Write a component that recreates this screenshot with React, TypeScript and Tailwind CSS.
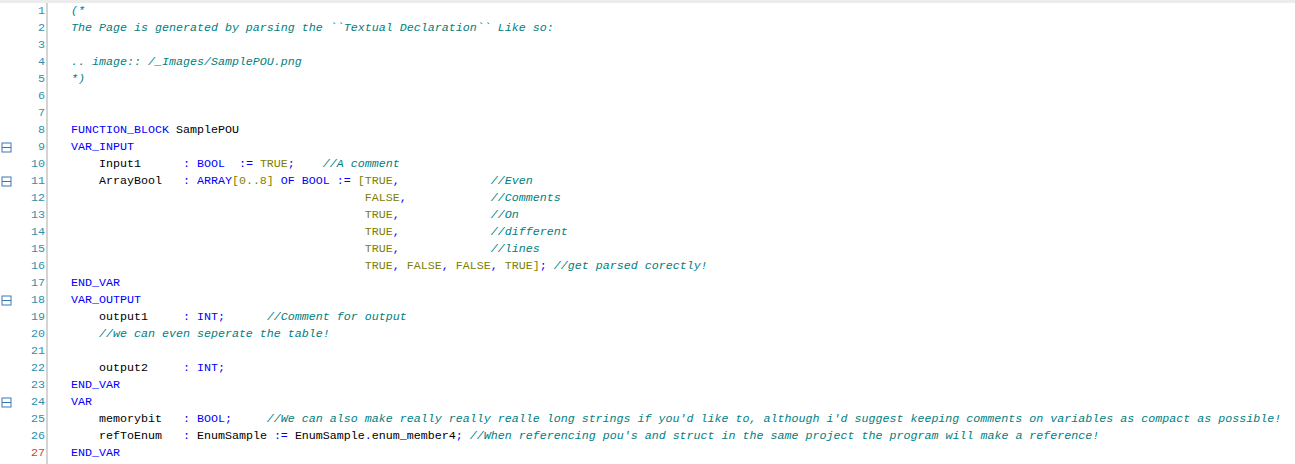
type Tok = [string, string];

const K = "text-[#0000ff]"; // keyword / punctuation
const C = "text-[#008080] italic"; // comment
const L = "text-[#808000]"; // literal
const I = "text-black"; // identifier

const lines: { toks: Tok[]; fold?: boolean }[] = [
  { toks: [["(*", C]] },
  { toks: [["The Page is generated by parsing the ``Textual Declaration`` Like so:", C]] },
  { toks: [] },
  { toks: [[".. image:: /_Images/SamplePOU.png", C]] },
  { toks: [["*)", C]] },
  { toks: [] },
  { toks: [] },
  { toks: [["FUNCTION_BLOCK", K], [" SamplePOU", I]] },
  { toks: [["VAR_INPUT", K]], fold: true },
  {
    toks: [
      ["    Input1      ", I],
      [": BOOL  := ", K],
      ["TRUE", L],
      [";", K],
      ["    //A comment", C],
    ],
  },
  {
    toks: [
      ["    ArrayBool   ", I],
      [": ARRAY", K],
      ["[0..8]", L],
      [" OF BOOL := ", K],
      ["[TRUE", L],
      [",", K],
      ["             //Even", C],
    ],
    fold: true,
  },
  { toks: [["                                          ", I], ["FALSE", L], [",", K], ["            //Comments", C]] },
  { toks: [["                                          ", I], ["TRUE", L], [",", K], ["             //On", C]] },
  { toks: [["                                          ", I], ["TRUE", L], [",", K], ["             //different", C]] },
  { toks: [["                                          ", I], ["TRUE", L], [",", K], ["             //lines", C]] },
  {
    toks: [
      ["                                          ", I],
      ["TRUE", L],
      [", ", K],
      ["FALSE", L],
      [", ", K],
      ["FALSE", L],
      [", ", K],
      ["TRUE]", L],
      [";", K],
      [" //get parsed corectly!", C],
    ],
  },
  { toks: [["END_VAR", K]] },
  { toks: [["VAR_OUTPUT", K]], fold: true },
  { toks: [["    output1     ", I], [": INT;", K], ["      //Comment for output", C]] },
  { toks: [["    //we can even seperate the table!", C]] },
  { toks: [] },
  { toks: [["    output2     ", I], [": INT;", K]] },
  { toks: [["END_VAR", K]] },
  { toks: [["VAR", K]], fold: true },
  {
    toks: [
      ["    memorybit   ", I],
      [": BOOL;", K],
      [
        "     //We can also make really really realle long strings if you'd like to, although i'd suggest keeping comments on variables as compact as possible!",
        C,
      ],
    ],
  },
  {
    toks: [
      ["    refToEnum   ", I],
      [": ", K],
      ["EnumSample ", I],
      [":= ", K],
      ["EnumSample", I],
      [".", K],
      ["enum_member4", I],
      [";", K],
      [" //When referencing pou's and struct in the same project the program will make a reference!", C],
    ],
  },
  { toks: [["END_VAR", K]] },
];

function FoldBox() {
  return (
    <svg width="11" height="11" viewBox="0 0 11 11" className="block">
      <rect x="1" y="1" width="9" height="9" fill="none" stroke="#3a78b5" strokeWidth="1" />
      <line x1="1" y1="5.5" x2="10" y2="5.5" stroke="#3a78b5" strokeWidth="1" />
    </svg>
  );
}

export default function App() {
  return (
    <div
      className="w-[1295px] h-[464px] bg-white overflow-hidden text-[11.67px] leading-[17px]"
      style={{ fontFamily: '"Liberation Mono", "Courier New", monospace' }}
    >
      <div className="h-[3px] bg-[#ececec]" />
      <div className="flex h-[461px]">
        <div className="w-[46px] flex flex-col">
          {lines.map((ln, i) => (
            <div key={i} className="h-[17px] flex items-center">
              <div className="w-[16px] pl-[1px] flex items-center">{ln.fold ? <FoldBox /> : null}</div>
              <div
                className={
                  "flex-1 text-right pr-[1px] " + (i === lines.length - 1 ? "text-[#d23c3c]" : "text-[#2b91af]")
                }
              >
                {i + 1}
              </div>
            </div>
          ))}
        </div>
        <div className="w-[2px] bg-[#d4d4d4]" />
        <div className="flex-1 pl-[23px] flex flex-col whitespace-pre">
          {lines.map((ln, i) => (
            <div key={i} className="h-[17px]">
              {ln.toks.map(([t, c], j) => (
                <span key={j} className={c}>
                  {t}
                </span>
              ))}
            </div>
          ))}
        </div>
      </div>
    </div>
  );
}
